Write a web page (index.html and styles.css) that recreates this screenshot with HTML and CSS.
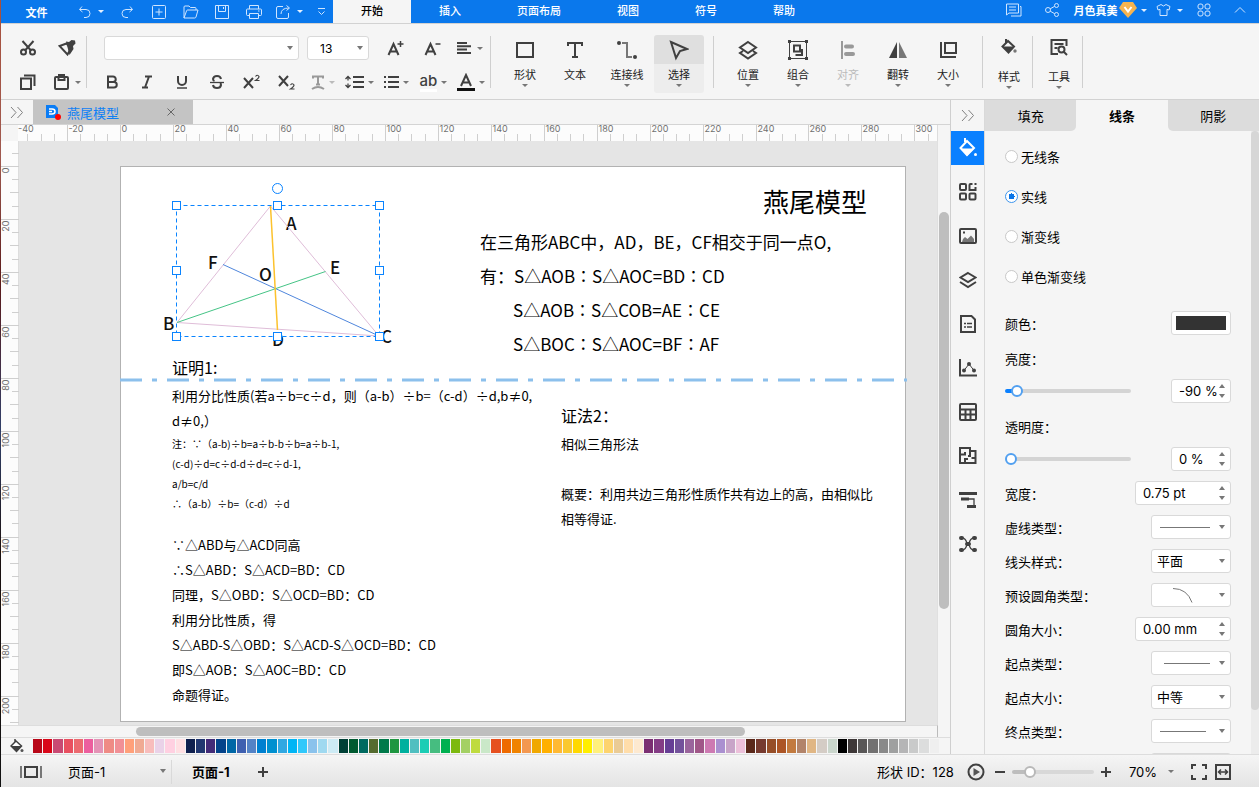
FILE: index.html
```html
<!DOCTYPE html>
<html lang="zh-CN">

<head>
    <meta charset="utf-8">
    <meta name="viewport" content="width=device-width, initial-scale=1">
    <title>燕尾模型</title>
    <link rel="stylesheet" href="styles.css">
</head>

<body>
    <header class="titlebar">
        <button class="file-menu">文件</button>
        <div class="quick">
            <button class="q-drop" aria-label="撤销"><svg width="14" height="14" viewBox="0 0 14 14"><path d="M4 1.500 1.500 4.500 4.500 7M1.800 4.500H8a4 4 0 0 1 0 8H6"/></svg><i class="caret"></i></button>
            <button aria-label="重做"><svg width="14" height="14" viewBox="0 0 14 14"><path d="M10 1.500 12.500 4.500 9.500 7M12.200 4.500H6a4 4 0 0 0 0 8h2"/></svg></button>
            <button aria-label="新建"><svg width="14" height="14" viewBox="0 0 14 14"><rect x=".5" y=".5" width="13" height="13" rx="1"/><path d="M7 3.500v7M3.500 7h7"/></svg></button>
            <button aria-label="打开"><svg width="16" height="14" viewBox="0 0 16 14"><path d="M1 13V2q0-1 1-1h4l1.500 1.500H12q1 0 1 1V5M1 13 3.500 6q.3-1 1-1H15l-2 7q-.3 1-1.300 1z"/></svg></button>
            <button aria-label="保存"><svg width="14" height="14" viewBox="0 0 14 14"><path d="M.5.500h13v13H.5zM3.500.500v6h7v-6M8.500 2v2"/></svg></button>
            <button aria-label="打印"><svg width="16" height="14" viewBox="0 0 16 14"><path d="M3.500 4V.500h9V4M3.500 10.500h-2q-1 0-1-1V5q0-1 1-1h13q1 0 1 1v4.500q0 1-1 1h-2M3.500 8.500h9v5h-9zM12 6h1.500"/></svg></button>
            <button class="q-drop" aria-label="导出"><svg width="15" height="14" viewBox="0 0 15 14"><path d="M7 1.500H2q-1.500 0-1.500 1.500v9q0 1.500 1.500 1.500h9q1.500 0 1.500-1.500V8M5 9q0-6 8-6M10.500.500 13.500 3 10.500 5.500"/></svg><i class="caret"></i></button>
            <button class="q-more" aria-label="更多"><svg width="9" height="9" viewBox="0 0 9 9"><path d="M1 1.500h7M1.500 4.500l3 3 3-3"/></svg></button>
        </div>
        <nav class="menu">
            <a href="#" class="active">开始</a>
            <a href="#">插入</a>
            <a href="#">页面布局</a>
            <a href="#">视图</a>
            <a href="#">符号</a>
            <a href="#">帮助</a>
        </nav>
        <div class="account">
            <button aria-label="评论"><svg width="16" height="14" viewBox="0 0 16 14"><path d="M.5 1h12v9H3L.5 12zM14 3.500h1v9.500H5M3 4h7M3 7h7"/></svg></button>
            <button aria-label="分享"><svg width="15" height="14" viewBox="0 0 15 14"><circle cx="3" cy="7" r="2.500"/><circle cx="11.500" cy="2.500" r="2"/><circle cx="11.500" cy="11.500" r="2"/><path d="m5.200 5.800 4.500-2.500M5.200 8.200l4.500 2.500"/></svg></button>
            <button class="user">月色真美<svg class="vip" width="18" height="16" viewBox="0 0 18 16"><path d="M4 0h10l4 6-9 10L0 6z" fill="#f6b450"/><path d="m5.500 5 3.500 4.500L12.500 5" stroke="#fff" stroke-width="2"/></svg><i class="caret"></i></button>
            <button class="shirt" aria-label="主题"><svg width="15" height="14" viewBox="0 0 15 14"><path d="M5 1.500 1 3.500 2 7l2-.7v6.200h7V6.300l2 .7 1-3.500-4-2Q7.500 4.500 5 1.500z"/></svg><i class="caret"></i></button>
            <button class="apps" aria-label="应用"><svg width="14" height="14" viewBox="0 0 14 14"><rect x="1" y="1" width="5" height="5" rx="2"/><rect x="8" y="1" width="5" height="5" rx="2"/><rect x="1" y="8" width="5" height="5" rx="2"/><rect x="8" y="8" width="5" height="5" rx="2"/></svg></button>
            <button class="fold" aria-label="折叠"><svg width="12" height="8" viewBox="0 0 12 8"><path d="M1 6.500 6 1.500l5 5"/></svg></button>
        </div>
    </header>

    <div class="ribbon">
        <div class="group clipboard">
            <button aria-label="剪切"><svg width="16" height="16" viewBox="0 0 16 16"><circle cx="3.500" cy="12" r="2.500"/><circle cx="12.500" cy="12" r="2.500"/><path d="M2.500 1 11 10.500M13.500 1 5 10.500"/></svg></button>
            <button aria-label="格式刷"><svg width="18" height="16" viewBox="0 0 18 16"><path d="M8.500 3.500 1.500 6l8 8.500 3.500-6z"/><path d="m8 1.500 3 .5 2.500-2L17 .500l.5 3L15 6l.5 3-4 6z" fill="#404040" stroke="none"/></svg></button>
            <button aria-label="复制"><svg width="16" height="16" viewBox="0 0 16 16"><path d="M1 4.500h10V15H1zM4 1.500h10.500V12"/></svg></button>
            <button aria-label="粘贴"><svg width="15" height="16" viewBox="0 0 15 16"><rect x="1" y="3" width="13" height="12" rx="1"/><path d="M4.500 3.500v2.500h6V3.500M5 3V1h5v2"/></svg><i class="caret"></i></button>
        </div>
        <div class="group font-tools">
            <div class="row first">
                <span class="combo family"><select aria-label="字体"><option></option></select></span>
                <span class="combo size"><select aria-label="字号"><option>13</option></select></span>
                <button aria-label="增大字号"><svg width="17" height="16" viewBox="0 0 17 16"><path d="M1.500 15 6.500 4 11.500 15M3.500 11.500h6"/><path d="M13.500 1v6M10.500 4h6" stroke-width="1.500"/></svg></button>
                <button aria-label="减小字号"><svg width="17" height="16" viewBox="0 0 17 16"><path d="M1.500 15 6.500 4 11.500 15M3.500 11.500h6"/><path d="M11.500 4h5" stroke-width="1.500"/></svg></button>
                <button aria-label="对齐"><svg width="15" height="12" viewBox="0 0 15 12"><path d="M0 1h10M0 4.300h14M0 7.600h10M0 11h14"/></svg><i class="caret"></i></button>
            </div>
            <div class="row">
                <button aria-label="加粗"><svg width="12" height="14" viewBox="0 0 12 14"><path d="M2 1.500h5a2.500 2.500 0 0 1 0 5.500H2zM2 7h6a2.700 2.700 0 0 1 0 5.500H2z"/></svg></button>
                <button aria-label="斜体"><svg width="12" height="14" viewBox="0 0 12 14"><path d="M4 1.500h7M1 12.500h6M8 1.500 4 12.500"/></svg></button>
                <button aria-label="下划线"><svg width="12" height="14" viewBox="0 0 12 14"><path d="M2 1v5a4 4 0 0 0 8 0V1"/><path d="M1 13h10" stroke-width="1.500"/></svg></button>
                <button aria-label="删除线"><svg width="16" height="14" viewBox="0 0 16 14"><path d="M12 4Q11.500 1 8 1T4 4q0 1.500 1.500 2M4 10q.5 3 4 3t4-3q0-1.500-1-2"/><path d="M1 7.500h14" stroke-width="1.300"/></svg></button>
                <button aria-label="上标"><svg width="18" height="16" viewBox="0 0 18 16"><path d="m1 4 9 10M10 4 1 14"/><path d="M12.500 2.500q2-2.500 3.500 0Q16 4 12.500 6.500h4" stroke-width="1.200"/></svg></button>
                <button aria-label="下标"><svg width="18" height="16" viewBox="0 0 18 16"><path d="m1 2 9 10M10 2 1 12"/><path d="M12.500 11q2-2.500 3.500 0 0 1.500-3.500 4h4" stroke-width="1.200"/></svg></button>
                <button class="drop off" aria-label="文字效果"><svg width="14" height="15" viewBox="0 0 14 15"><path d="M2 3.500V1.500h10v2M7 1.500v8M5 9.500h4M1 14q6-4 12 0"/></svg><i class="caret"></i></button>
                <button class="drop" aria-label="行距"><svg width="19" height="14" viewBox="0 0 19 14"><path d="M8 2h11M8 7h11M8 12h11"/><path d="M3 1.500v4M3 8.500v4M.5 4 3 1.500 5.500 4M.5 10 3 12.500 5.500 10" stroke-width="1.300"/></svg><i class="caret"></i></button>
                <button class="drop" aria-label="列表"><svg width="15" height="12" viewBox="0 0 15 12"><path d="M0 1h2M0 6h2M0 11h2M4 1h11M4 6h11M4 11h11"/></svg><i class="caret"></i></button>
                <button class="drop hilite" aria-label="突出显示"><span>ab</span><i class="caret"></i></button>
                <button class="drop color" aria-label="字体颜色"><svg width="18" height="18" viewBox="0 0 18 18"><path d="M4 13 9 2l5 11M5.500 9.500h7"/><path d="M0 16.500h18" stroke="#111" stroke-width="3"/></svg><i class="caret"></i></button>
            </div>
        </div>
        <div class="group big">
            <button><svg width="20" height="18" viewBox="0 0 20 18"><path d="M2 2h16v14H2z"/></svg>形状<i class="caret"></i></button>
            <button><svg width="18" height="18" viewBox="0 0 18 18"><path d="M2 5V2h14v3M9 2v14M6 16h6"/></svg>文本</button>
            <button class="wide"><svg width="20" height="18" viewBox="0 0 20 18"><circle cx="2" cy="2" r="2" fill="#404040" stroke="none"/><circle cx="18" cy="16" r="2" fill="#404040" stroke="none"/><path d="M5 2h5v14h5" stroke="#777"/></svg>连接线<i class="caret"></i></button>
            <button class="pressed"><svg width="20" height="20" viewBox="0 0 20 20"><path d="m2 2 16 7-7 2-4 7z"/></svg>选择<i class="caret"></i></button>
        </div>
        <div class="group big">
            <button><svg width="20" height="20" viewBox="0 0 20 20"><path d="m10 2 8 5.500-8 5.500-8-5.500zM5 11l-3 2 8 5.500 8-5.500-3-2"/></svg>位置<i class="caret"></i></button>
            <button><svg width="20" height="20" viewBox="0 0 20 20"><path d="M1.500 1.500h17v17h-17z" stroke-width="1"/><path d="M6 5.500h6v6H6zM14 9v6H8.500v-1"/><path d="M0 0h3v3H0zM17 0h3v3h-3zM0 17h3v3H0zM17 17h3v3h-3z" fill="#404040" stroke="none"/></svg>组合<i class="caret"></i></button>
            <button class="off"><svg width="16" height="18" viewBox="0 0 16 18"><path d="M2 0v18"/><path d="M6 5.500h6M6 13h7" stroke-width="4" stroke-linecap="round"/></svg>对齐<i class="caret"></i></button>
            <button><svg width="20" height="18" viewBox="0 0 20 18"><path d="M9 1v16H1z" fill="#404040" stroke="none"/><path d="M11 1v16h8z" fill="#777" stroke="none"/></svg>翻转<i class="caret"></i></button>
            <button><svg width="18" height="18" viewBox="0 0 18 18"><path d="M6 2h11v10H6zM2 1v15h15"/></svg>大小<i class="caret"></i></button>
        </div>
        <div class="group big tall">
            <button><svg width="16" height="17" viewBox="0 0 16 17"><path d="M5 .500v4M7 2.500 1.500 8 7.500 14 13 8z"/><path d="m2 8 5.500 6L13 8z" fill="#404040" stroke="none"/><circle cx="14" cy="12.500" r="1.700" fill="#777" stroke="none"/></svg>样式<i class="caret"></i></button>
        </div>
        <div class="group big tall">
            <button><svg width="18" height="18" viewBox="0 0 18 18"><path d="M8 16H1.500V2h15v6M4.500 6h9M4.500 10h3"/><circle cx="11.500" cy="11.500" r="3"/><path d="m14 14 3 3"/></svg>工具<i class="caret"></i></button>
        </div>
    </div>

    <main class="main">
        <section class="work">
            <div class="doc-tabs">
                <button class="expand" aria-label="展开"><svg width="14" height="13" viewBox="0 0 14 13"><path d="m1 1 5 5.500L1 12M7.500 1l5 5.500-5 5.500"/></svg></button>
                <div class="doc-tab">
                    <svg width="15" height="15" viewBox="0 0 15 15"><path d="M0 0h9l3 3v10H0z" fill="#0a7cf5"/><path d="M3 4h3q3 0 3 2.500T6 9H3M3 6.500h3" fill="none" stroke="#fff" stroke-width="1.500"/><circle cx="12" cy="12" r="3" fill="#f00"/></svg>
                    <a href="#">燕尾模型</a>
                    <button aria-label="关闭"><svg width="8" height="8" viewBox="0 0 8 8"><path d="m.5.500 7 7M7.500.500l-7 7"/></svg></button>
                </div>
            </div>
            <div class="ruler-top"><svg id="rulerX" width="100%" height="16"></svg></div>
            <div class="stage">
                <div class="ruler-left"><svg id="rulerY" width="18" height="100%"></svg></div>
                <div class="canvas">
                    <article class="paper">
                        <h1>燕尾模型</h1>
                        <div class="given">
                            <p>在三角形ABC中，AD，BE，CF相交于同一点O,</p>
                            <p>有：S△AOB∶S△AOC=BD∶CD</p>
                            <p class="indent">S△AOB∶S△COB=AE∶CE</p>
                            <p class="indent">S△BOC∶S△AOC=BF∶AF</p>
                        </div>
                        <div class="proof one">
                            <h2>证明1:</h2>
                            <p>利用分比性质(若a÷b=c÷d，则（a-b）÷b=（c-d）÷d,b≠0,</p>
                            <p>d≠0,）</p>
                            <div class="note">
                                <p>注：∵（a-b)÷b=a÷b-b÷b=a÷b-1,</p>
                                <p>(c-d)÷d=c÷d-d÷d=c÷d-1,</p>
                                <p>a/b=c/d</p>
                                <p>∴（a-b）÷b=（c-d）÷d</p>
                            </div>
                            <p>∵△ABD与△ACD同高</p>
                            <p>∴S△ABD：S△ACD=BD：CD</p>
                            <p>同理，S△OBD：S△OCD=BD：CD</p>
                            <p>利用分比性质，得</p>
                            <p>S△ABD-S△OBD：S△ACD-S△OCD=BD：CD</p>
                            <p>即S△AOB：S△AOC=BD：CD</p>
                            <p>命题得证。</p>
                        </div>
                        <div class="proof two">
                            <h2>证法2：</h2>
                            <p>相似三角形法</p>
                            <p>&nbsp;</p>
                            <p>概要：利用共边三角形性质作共有边上的高，由相似比</p>
                            <p>相等得证.</p>
                        </div>
                        <svg class="divider" width="788" height="4"><path d="M1 2h787" stroke="#8cc0ec" stroke-width="3" stroke-dasharray="22 10 5 10"/></svg>
                        <svg class="figure" width="240" height="170" viewBox="161 181 240 170">
                            <g class="names">
                                <text x="286" y="230">A</text>
                                <text x="208" y="269">F</text>
                                <text x="330" y="274">E</text>
                                <text x="259" y="281">O</text>
                                <text x="163" y="330">B</text>
                                <text x="272" y="346">D</text>
                                <text x="381" y="343">C</text>
                            </g>
                            <g fill="none">
                                <path d="M270.500 206 177 322.500 379 336z" stroke="#dfbdd8"/>
                                <path d="M223 264.500 379 336" stroke="#4f86dc"/>
                                <path d="M177 322.500 325.500 271.500" stroke="#45c486"/>
                                <path d="M270.500 206 277.500 330" stroke="#fcc22d" stroke-width="1.500"/>
                                <path d="M176.500 205.500h203v131h-203z" stroke="#0a84ff" stroke-dasharray="4 3"/>
                            </g>
                            <g fill="#fff" stroke="#0a84ff">
                                <circle cx="277.500" cy="188.500" r="5"/>
                                <rect x="172.500" y="201.500" width="8" height="8"/>
                                <rect x="273.500" y="201.500" width="8" height="8"/>
                                <rect x="375.500" y="201.500" width="8" height="8"/>
                                <rect x="172.500" y="266.500" width="8" height="8"/>
                                <rect x="375.500" y="266.500" width="8" height="8"/>
                                <rect x="172.500" y="332.500" width="8" height="8"/>
                                <rect x="273.500" y="332.500" width="8" height="8"/>
                                <rect x="375.500" y="332.500" width="8" height="8"/>
                            </g>
                        </svg>
                    </article>
                </div>
                <div class="vscroll"><div class="thumb"></div></div>
            </div>
            <div class="hscroll"><div class="thumb"></div></div>
            <div class="palette">
                <svg width="14" height="14" viewBox="0 0 14 14"><path d="M5 0v3M6 2 1 7l5.500 5.500 5-5.500z" fill="#fff" stroke="#404040" stroke-width="1.500"/><path d="m1 7 5.500 5.500 5-5.500z" fill="#404040"/><circle cx="12" cy="11.500" r="1.500" fill="#555"/></svg>
                <div class="swatches" id="swatches"></div>
            </div>
        </section>

        <aside class="rail">
            <button class="rail-fold" aria-label="收起"><svg width="14" height="13" viewBox="0 0 14 13"><path d="m1 1 5 5.500L1 12M7.500 1l5 5.500-5 5.500"/></svg></button>
            <button class="on" aria-label="样式"><svg width="18" height="20" viewBox="0 0 18 20"><path d="M6 0v4M8 3 1.500 10 8 17l7-7z" stroke="#fff"/><path d="M2 10.500 8 18l7-7.500z" fill="#fff" stroke="none"/><circle cx="16.500" cy="16.500" r="1.500" fill="#fff" stroke="none"/></svg></button>
            <button aria-label="符号库"><svg width="18" height="18" viewBox="0 0 18 18"><rect x="1" y="1" width="6" height="6" rx="1"/><rect x="1" y="10.500" width="6" height="6" rx="1"/><rect x="10.500" y="10.500" width="6" height="6" rx="1"/><path d="M13.500 1h-2q-1 0-1 1v5h6V4M15.500 1h2"/></svg></button>
            <button aria-label="图片"><svg width="18" height="16" viewBox="0 0 18 16"><rect x="1" y="1" width="16" height="14" rx="1"/><path d="m3 14 1-3 2-2 2.500 2L12 7.500 15 11v3z" fill="#777" stroke="none"/><path d="M4 4.500h2"/></svg></button>
            <button aria-label="图层"><svg width="18" height="18" viewBox="0 0 18 18"><path d="m9 2 7.500 4.500L9 11 1.500 6.500zM1 11l8 5 8-5"/></svg></button>
            <button aria-label="页面"><svg width="16" height="18" viewBox="0 0 16 18"><path d="M1 1h10.500L15 4.500V17H1z"/><path d="M4 8.500h2M4 12h2M7 8.500h5M7 12h5" stroke-width="1.500"/></svg></button>
            <button aria-label="图表"><svg width="18" height="18" viewBox="0 0 18 18"><path d="M1 0v16.500h17"/><path d="m5 11.500 5-6.500 5 6.500" stroke-width="1"/><g fill="#404040" stroke="none"><circle cx="5" cy="11.500" r="2"/><circle cx="10" cy="5" r="2"/><circle cx="15" cy="11.500" r="2"/></g></svg></button>
            <button aria-label="表格"><svg width="18" height="18" viewBox="0 0 18 18"><rect x="1" y="1" width="16" height="16" rx="1"/><path d="M1 6.500h16M1 11.500h16M6.500 6.500v10M11.500 6.500v10"/></svg></button>
            <button aria-label="平面图"><svg width="18" height="18" viewBox="0 0 18 18"><path d="M1 1h10v3h5.500v12H1zM1 7.500h5V5M11 4v5h-2M6 16v-4h3M12.500 11H16"/></svg></button>
            <button aria-label="甘特图"><svg width="18" height="18" viewBox="0 0 18 18"><path d="M0 2.500h18M2 8h8M8 15.500h9" stroke-width="3"/><path d="M10 8h5v6" stroke-width="1.300"/></svg></button>
            <button aria-label="脑图"><svg width="18" height="18" viewBox="0 0 18 18"><path d="M3 3q4 0 5 6-1 6-5 6M15 3q-4 0-5 6 1 6 5 6" stroke-width="1.300"/><path d="M2 3h1M15 3h1M2 15h1M15 15h1M8 9h2" stroke-width="4" stroke-linecap="round"/></svg></button>
        </aside>

        <aside class="panel">
            <div class="panel-tabs">
                <button>填充</button>
                <button class="active">线条</button>
                <button>阴影</button>
            </div>
            <div class="panel-body">
                <form class="props">
                    <label class="radio"><input type="radio" name="line">无线条</label>
                    <label class="radio"><input type="radio" name="line" checked>实线</label>
                    <label class="radio"><input type="radio" name="line">渐变线</label>
                    <label class="radio"><input type="radio" name="line">单色渐变线</label>
                    <div class="prop color-prop"><span id="color-label">颜色：</span><button type="button" class="color-box" aria-labelledby="color-label"><i></i></button></div>
                    <div class="prop title"><label for="light">亮度：</label></div>
                    <div class="prop slide"><input type="range" id="light" class="light" min="-100" max="100" value="-90"><span class="spin small"><input type="text" aria-label="亮度" value="-90 %"></span></div>
                    <div class="prop title"><label for="alpha">透明度：</label></div>
                    <div class="prop slide"><input type="range" id="alpha" min="0" max="100" value="0"><span class="spin small"><input type="text" aria-label="透明度" value="0 %"></span></div>
                    <div class="prop"><label for="width">宽度：</label><span class="spin"><input type="text" id="width" value="0.75 pt"></span></div>
                    <div class="prop"><label for="dash">虚线类型：</label><span class="combo"><select id="dash"><option></option></select><svg width="58" height="22"><path d="M8 11.500h50"/></svg></span></div>
                    <div class="prop"><label for="cap">线头样式：</label><span class="combo"><select id="cap"><option>平面</option></select></span></div>
                    <div class="prop"><label for="corner">预设圆角类型：</label><span class="combo"><select id="corner"><option></option></select><svg width="58" height="22"><path d="M21 4.500q14 0 19 14"/></svg></span></div>
                    <div class="prop"><label for="radius">圆角大小：</label><span class="spin"><input type="text" id="radius" value="0.00 mm"></span></div>
                    <div class="prop"><label for="start">起点类型：</label><span class="combo"><select id="start"><option></option></select><svg width="58" height="22"><path d="M12 11.500h46"/></svg></span></div>
                    <div class="prop"><label for="start-size">起点大小：</label><span class="combo"><select id="start-size"><option>中等</option></select></span></div>
                    <div class="prop"><label for="end">终点类型：</label><span class="combo"><select id="end"><option></option></select><svg width="58" height="22"><path d="M8 11.500h46"/></svg></span></div>
                    <div class="prop"><label for="end-size">终点大小：</label><span class="combo"><select id="end-size"><option>中等</option></select></span></div>
                </form>
                <div class="panel-scroll"><div class="thumb"></div></div>
            </div>
        </aside>
    </main>

    <footer class="status">
        <button class="view-mode" aria-label="页面视图"><svg width="22" height="12" viewBox="0 0 22 12"><path d="M5 1h12v10H5z"/><path d="M1 0v12M21 0v12" stroke="#777"/></svg></button>
        <span class="combo page-pick"><select aria-label="页面"><option>页面-1</option></select></span>
        <a href="#" class="page-tab">页面-1</a>
        <button aria-label="添加页面"><svg width="10" height="10" viewBox="0 0 10 10"><path d="M5 0v10M0 5h10"/></svg></button>
        <div class="status-right">
            <span class="shape-id">形状 ID：128</span>
            <button aria-label="播放"><svg width="18" height="18" viewBox="0 0 18 18"><circle cx="9" cy="9" r="7.500"/><path d="m6.500 5 6.500 4-6.500 4z" fill="#555" stroke="none"/></svg></button>
            <button aria-label="缩小"><svg width="10" height="10" viewBox="0 0 10 10"><path d="M0 5h10"/></svg></button>
            <input type="range" class="zoom" aria-label="缩放" min="0" max="100" value="17">
            <button aria-label="放大"><svg width="10" height="10" viewBox="0 0 10 10"><path d="M5 0v10M0 5h10"/></svg></button>
            <button class="percent">70%<i class="caret"></i></button>
            <button aria-label="全屏"><svg width="16" height="16" viewBox="0 0 16 16"><path d="M1 5V1h4M11 1h4v4M15 11v4h-4M5 15H1v-4"/></svg></button>
            <button aria-label="适合宽度"><svg width="16" height="16" viewBox="0 0 16 16"><path d="M1 1h14v14H1z"/><path d="M3.500 8h9M6 5.500 3.500 8 6 10.500M10 5.500 12.500 8 10 10.500" stroke-width="1.500"/></svg></button>
        </div>
    </footer>
    <script src="script.js"></script>
</body>

</html>
```
FILE: styles.css
```css
* {
    box-sizing: border-box;
}

body {
    margin: 0;
    padding-left: 1px;
    height: 100vh;
    display: flex;
    flex-direction: column;
    overflow: hidden;
    background: linear-gradient(#a8503c, #a05a50 20%, #5a1a1a 36%, #30406a 55%, #1a1010 70%, #111);
    font-family: Inter, "Noto Sans CJK SC", sans-serif;
    font-size: 13px;
    color: #000;
}

button,
input,
select {
    margin: 0;
    padding: 0;
    border: 0;
    background: none;
    font: inherit;
    color: inherit;
}

a {
    color: inherit;
    text-decoration: none;
}

h1,
h2,
p {
    margin: 0;
    font-weight: inherit;
}

button {
    display: flex;
    align-items: center;
    justify-content: center;
    gap: 6px;
    white-space: nowrap;
}

button svg {
    flex: none;
    fill: none;
    stroke: #404040;
    stroke-width: 2;
}

.caret {
    flex: none;
    border: 3px solid transparent;
    border-top-color: #777;
    border-bottom: 0;
}

/* title bar */
.titlebar {
    flex: none;
    height: 23px;
    display: flex;
    background: #0a78ec;
    color: #fff;
    font-size: 11px;
    font-weight: 500;
}

.titlebar svg {
    stroke: #cfe5ff;
    stroke-width: 1;
}

.titlebar .caret {
    border-top-color: #e4f0ff;
}

.file-menu {
    width: 71px;
    font-weight: 700;
}

.quick {
    width: 261px;
    display: flex;
}

.quick button {
    width: 32px;
}

.quick .q-drop {
    width: 39px;
}

.quick .q-more {
    width: 24px;
}

.menu {
    display: flex;
    line-height: 23px;
}

.menu a {
    padding: 0 28px;
}

.menu .active {
    background: #f5f5f5;
    color: #000;
}

.account {
    margin-left: auto;
    display: flex;
    padding-right: 12px;
    height: 20px;
}

.account button {
    width: 38px;
}

.account .user {
    width: 78px;
    gap: 0;
    font-weight: 700;
}

.account .vip {
    stroke: none;
    margin: 0 4px 0 1px;
}

.account .shirt {
    width: 36px;
    margin-left: 2px;
}

.account .apps {
    width: 32px;
    margin-left: 1px;
}

.account .fold {
    width: 14px;
    margin-left: 13px;
}

/* ribbon */
.ribbon {
    flex: none;
    height: 77px;
    display: flex;
    background: #f5f5f5;
    border-top: 1px solid #d2d2d2;
    border-bottom: 1px solid #d2d2d2;
    padding-bottom: 1px;
}

.group {
    position: relative;
    padding-right: 1px;
}

.group::after {
    content: "";
    position: absolute;
    right: 0;
    top: 12px;
    height: 52px;
    width: 1px;
    background: #cfcfcf;
}

.clipboard {
    display: grid;
    grid-template-columns: 40px 38px;
    grid-template-rows: 34px 34px;
    padding-left: 7px;
    padding-top: 7px;
}

.font-tools {
    width: 404px;
    padding: 7px 1px 0 7px;
}

.row {
    height: 34px;
    display: flex;
    align-items: center;
}

.row.first {
    padding-left: 10px;
}

.row button {
    width: 35px;
    height: 30px;
    gap: 5px;
}

.row.first button {
    width: 37px;
}

.row .drop {
    width: 37px;
    gap: 4px;
}

.row .hilite {
    font-size: 15px;
    font-weight: 500;
    color: #404040;
    line-height: 16px;
}

.hilite span {
    border-bottom: 3px solid #fff;
}

.off svg {
    stroke: #999;
}

.off .caret {
    border-top-color: #bbb;
}

.big {
    display: flex;
    padding: 11px 10px 5px 9px;
    font-size: 11px;
    color: #222;
}

.big button {
    flex-direction: column;
    justify-content: flex-start;
    width: 50px;
    gap: 0;
    line-height: 16px;
    border-radius: 3px;
}

.big .wide {
    width: 54px;
}

.big button svg {
    height: 30px;
    margin-bottom: 2px;
}

.big .caret {
    margin-top: 1px;
}

.big .off {
    color: #bbb;
}

.big .pressed {
    background: linear-gradient(#dfdfdf 29px, #ededed 29px);
}

.tall {
    padding: 9px 0 0;
}

.tall button {
    padding-left: 2px;
}

.big.tall button svg {
    height: 28px;
    margin-bottom: 8px;
}

/* text and select fields */
.combo,
.spin {
    position: relative;
    display: block;
    width: 80px;
    height: 24px;
    background: #fff;
    border: 1px solid #d9d9d9;
    border-radius: 3px;
}

.spin {
    width: 96px;
}

.spin.small {
    width: 60px;
}

.combo select,
.spin input {
    display: block;
    appearance: none;
    width: 100%;
    height: 100%;
    padding: 0 5px;
    outline: 0;
}

.spin input {
    padding: 0 7px;
}

.combo svg {
    position: absolute;
    left: 0;
    top: 0;
    fill: none;
    stroke: #777;
    pointer-events: none;
}

.combo::after,
.spin::after,
.spin::before {
    content: "";
    position: absolute;
    right: 5px;
    top: 9px;
    border: 3px solid transparent;
    border-top: 4px solid #777;
    border-bottom: 0;
    pointer-events: none;
}

.spin::after {
    top: 14px;
}

.spin::before {
    top: 4px;
    border-top: 0;
    border-bottom: 4px solid #777;
}

.family {
    width: 195px;
    margin-right: 8px;
}

.size {
    width: 62px;
    margin-right: 8px;
}

.size select {
    padding-left: 12px;
    font-size: 12px;
}

/* work area */
.main {
    flex: 1;
    min-height: 0;
    display: grid;
    grid-template-columns: 1fr 34px 275px;
    background: #f5f5f5;
}

.work {
    min-width: 0;
    min-height: 0;
    display: flex;
    flex-direction: column;
}

.doc-tabs {
    flex: none;
    height: 25px;
    display: flex;
    border-bottom: 1px solid #d4d4d4;
}

.expand {
    width: 32px;
}

.expand svg,
.rail .rail-fold svg {
    stroke: #808080;
    stroke-width: 1;
}

.doc-tab {
    width: 160px;
    padding: 0 18px 0 13px;
    display: flex;
    align-items: center;
    gap: 6px;
    background: #c4c4c4;
    color: #0f80f5;
}

.doc-tab button {
    margin-left: auto;
}

.doc-tab button svg {
    stroke: #666;
    stroke-width: 1;
}

.ruler-top {
    flex: none;
    height: 16px;
    margin: 0 12px 0 17px;
    background: #fcfcfc;
    border-right: 1px solid #ddd;
}

.ruler-top svg,
.ruler-left svg {
    display: block;
    overflow: visible;
}

.ruler-left {
    width: 18px;
    background: #fcfcfc;
    border-right: 1px solid #ddd;
}

.tick {
    stroke: #cfcfcf;
}

.num {
    font-size: 9px;
    fill: #707070;
}

.stage {
    flex: 1;
    min-height: 0;
    display: grid;
    grid-template-columns: 18px 1fr 13px;
}

.canvas {
    min-width: 0;
    overflow: hidden;
    background: #e5e5e5;
    padding: 25px 31px 3px 101px;
}

.paper {
    position: relative;
    height: 100%;
    background: #fff;
    border: 1px solid #b2b2b2;
    font-family: "Noto Sans CJK SC", sans-serif;
    color: #000;
    white-space: nowrap;
}

.paper h1 {
    position: absolute;
    right: 38px;
    top: 15px;
    font-size: 26px;
    line-height: 38px;
}

.given {
    position: absolute;
    left: 359px;
    top: 58px;
    font-size: 17px;
    line-height: 34px;
}

.given .indent {
    padding-left: 33px;
}

.proof {
    position: absolute;
    line-height: 25px;
}

.proof h2 {
    font-size: 16px;
    line-height: 32px;
}

.one {
    left: 51px;
    top: 184px;
}

.two {
    left: 440px;
    top: 232px;
}

.note {
    margin: 1px 0 18px;
    font-size: 10px;
    line-height: 20px;
}

.divider {
    position: absolute;
    left: -2px;
    top: 211px;
}

.figure {
    position: absolute;
    left: 40px;
    top: 14px;
}

.names {
    font-size: 17px;
    font-weight: 500;
    fill: #111;
}

.vscroll {
    border-left: 1px solid #e0e0e0;
    padding: 0 1px;
}

.thumb {
    background: #bebebe;
    border-radius: 5px;
}

.vscroll .thumb {
    width: 10px;
    height: 68%;
    margin-top: 71px;
}

.hscroll {
    flex: none;
    height: 12px;
    margin-right: 12px;
    padding: 1px 0 0 135px;
    border-top: 1px solid #ddd;
    border-right: 1px solid #bbb;
}

.hscroll .thumb {
    width: 76%;
    height: 9px;
}

.palette {
    flex: none;
    height: 17px;
    display: flex;
    padding: 1px 11px 0 9px;
    gap: 9px;
    border-top: 1px solid #ddd;
}

.swatches {
    flex: 1;
    display: flex;
    gap: 1px;
}

.swatches button {
    flex: 1;
    height: 14px;
}

/* icon rail */
.rail {
    border-left: 1px solid #cfcfcf;
    display: flex;
    flex-direction: column;
    overflow: hidden;
}

.rail button {
    flex: none;
    height: 44px;
}

.rail .rail-fold {
    height: 31px;
}

.rail .on {
    height: 34px;
    margin-bottom: 5px;
    background: #0a80ff;
}

/* property panel */
.panel {
    min-height: 0;
    display: flex;
    flex-direction: column;
    border-left: 1px solid #d9d9d9;
}

.panel-tabs {
    flex: none;
    height: 31px;
    display: flex;
}

.panel-tabs button {
    flex: 1;
    background: #dcdcdc;
}

.panel-tabs button:first-child {
    border-bottom-right-radius: 5px;
}

.panel-tabs button:last-child {
    border-bottom-left-radius: 5px;
}

.panel-tabs .active {
    background: #f5f5f5;
    font-weight: 700;
}

.panel-body {
    flex: 1;
    min-height: 0;
    display: flex;
}

.props {
    flex: 1;
    overflow: hidden;
    padding: 5px 20px 0;
}

.radio {
    height: 40px;
    display: flex;
    align-items: center;
    gap: 3px;
}

.radio input {
    appearance: none;
    width: 13px;
    height: 13px;
    border: 1px solid #c8c8c8;
    border-radius: 50%;
    background: #fff;
}

.radio input:checked {
    border-color: #3d95ee;
    background: radial-gradient(circle, #0a75e8 0 3px, #fff 3px);
}

.prop {
    height: 34px;
    display: flex;
    align-items: center;
    justify-content: space-between;
}

.color-prop {
    margin-top: 10px;
}

.title {
    height: 36px;
}

.slide {
    height: 30px;
    margin-bottom: 2px;
}

.color-box {
    width: 60px;
    height: 24px;
    padding: 4px;
    background: #fff;
    border: 1px solid #d9d9d9;
    border-radius: 3px;
}

.color-box i {
    width: 100%;
    height: 100%;
    background: #333;
}

input[type="range"] {
    appearance: none;
    width: 126px;
    height: 4px;
    border-radius: 2px;
    background: #d4d4d4;
}

input.light {
    background: linear-gradient(90deg, #0a80ff 10px, #d4d4d4 10px);
}

input[type="range"]::-webkit-slider-thumb {
    appearance: none;
    width: 12px;
    height: 12px;
    border: 2px solid #52a0f0;
    border-radius: 50%;
    background: #fff;
}

.panel-scroll {
    width: 8px;
    background: #ececec;
}

.panel-scroll .thumb {
    width: 8px;
    height: 93%;
    background: #d6d6d6;
}

/* status bar */
.status {
    flex: none;
    height: 33px;
    display: flex;
    align-items: center;
    padding: 1px 0 0 19px;
    border-top: 1px solid #ddd;
    background: linear-gradient(#f5f5f5, #e4e4e4);
}

.page-pick {
    width: 109px;
    margin-left: 21px;
    background: none;
    border-width: 0 1px 0 0;
    border-radius: 0;
}

.page-tab {
    margin: 0 28px 0 20px;
    font-weight: 700;
}

.status-right {
    margin-left: auto;
    display: flex;
    align-items: center;
    padding-right: 28px;
}

.shape-id {
    margin-right: 13px;
}

.status-right button:nth-of-type(2) {
    margin: 0 7px 0 10px;
}

.status input.zoom {
    width: 82px;
    margin-right: 7px;
    background: linear-gradient(90deg, #bdbdbd 15px, #d8d8d8 15px);
}

.status input.zoom::-webkit-slider-thumb {
    border-color: #b8b8b8;
}

.percent {
    gap: 11px;
    margin: 0 17px 0 18px;
}

.status-right button:last-child {
    margin-left: 8px;
}
```
FILE: script.js
```js
var NS = 'http://www.w3.org/2000/svg';

function add(svg, name, attrs, text) {
    var el = document.createElementNS(NS, name);
    for (var key in attrs) el.setAttribute(key, attrs[key]);
    if (text !== undefined) el.textContent = text;
    svg.appendChild(el);
}

// one tick every 5 mm, a number every 20 mm
var unit = 2.648;
var rx = document.getElementById('rulerX');
for (var mm = -35; mm <= 305; mm += 5) {
    var x = Math.round(102 + mm * unit) + 0.5;
    add(rx, 'line', { x1: x, x2: x, y1: mm % 20 ? 9 : 0, y2: 16, class: 'tick' });
    if (mm % 20 === 0) add(rx, 'text', { x: x + 1, y: 7, class: 'num' }, mm);
}
add(rx, 'text', { x: 0, y: 7, class: 'num' }, '-40');

var ry = document.getElementById('rulerY');
for (mm = -5; mm <= 210; mm += 5) {
    var y = Math.round(25 + mm * unit) + 0.5;
    add(ry, 'line', { x1: mm % 20 ? (mm % 10 ? 11 : 9) : 0, x2: 18, y1: y, y2: y, class: 'tick' });
    if (mm % 20 === 0) add(ry, 'text', { transform: 'translate(8 ' + (y + 1) + ') rotate(-90)', 'text-anchor': 'end', class: 'num' }, mm);
}

var colors = ('b80718 d90719 c94a73 e95060 ec6a70 ec5f9e e493b6 ef8b85 f19096 ffa07a f0aa93 f8bdbc ead2e8 ffd0e1 ffdfe3 ' +
    '0f204f 213770 432b78 04438a 0067a6 3f60b0 5483c6 0080d0 0090d0 30a8e2 00b5f5 30c8fb 8ac2ec 9fd9f0 cdebf5 ' +
    '004036 005a30 006a60 556b2f 00794a 1e9640 00b09e 50bfc0 1ccdb5 46bd80 00b050 7db90f a4d064 bfdb3f cae8c8 ' +
    'e65020 ee6a00 f08300 f39850 f0a800 ffb000 ffb933 fac82f ffd800 ffee00 fff07c fdd36e eacb95 ffddaa fde9d0 ' +
    '7b2f72 843c85 663e95 73529b 9a659c a05788 cd7ab2 aa90d0 c8a4c8 ecc0da ' +
    '5a281a 763a2f 964e28 ac5526 c27a3f b2846a e0b684 d4ccc5 cad6cc ' +
    '000000 3e3838 595757 727171 898989 9fa0a0 b5b5b6 c9caca dcdddd efefef').split(' ');
var box = document.getElementById('swatches');
colors.forEach(function (c) {
    var b = document.createElement('button');
    b.style.background = '#' + c;
    b.setAttribute('aria-label', '#' + c);
    box.appendChild(b);
});
```
